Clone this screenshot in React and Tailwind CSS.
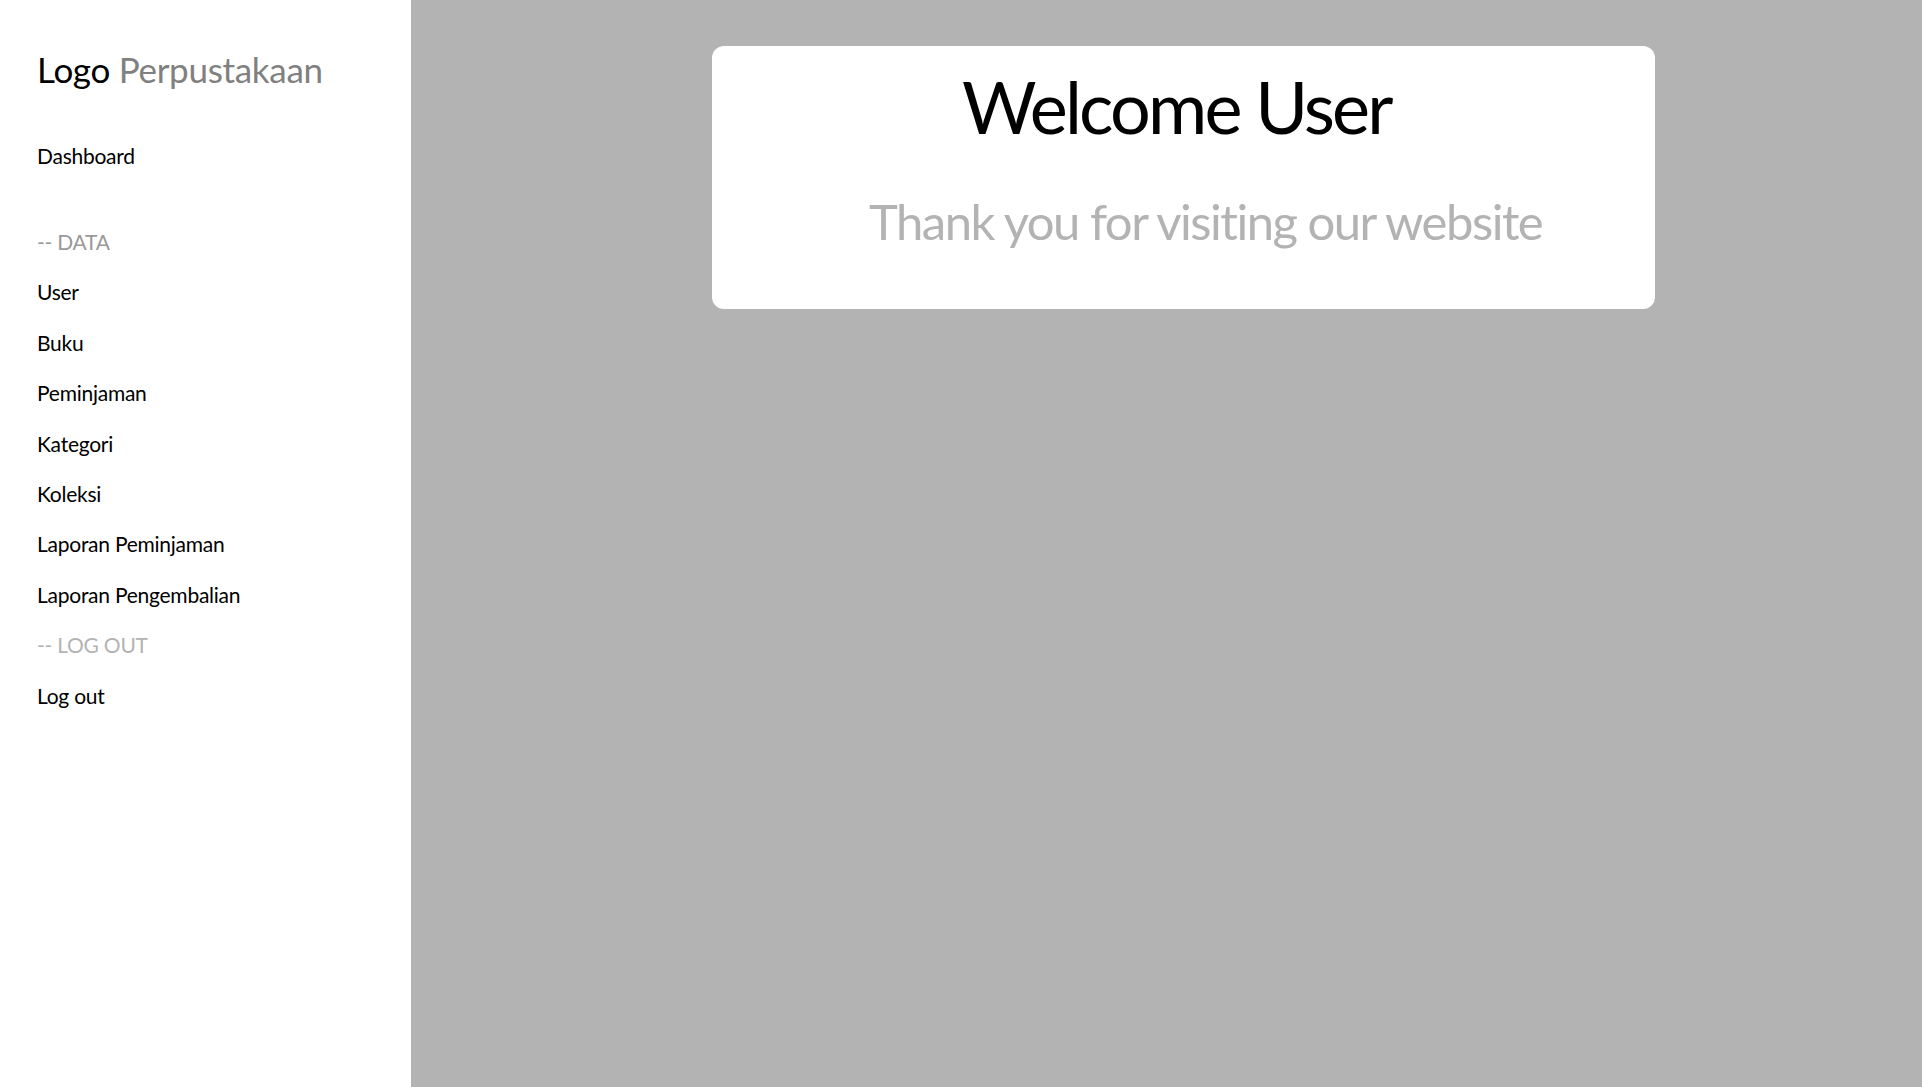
import React from "react";

const dataLinks = [
  "User",
  "Buku",
  "Peminjaman",
  "Kategori",
  "Koleksi",
  "Laporan Peminjaman",
  "Laporan Pengembalian",
];

function Sidebar() {
  return (
    <aside className="w-[411px] shrink-0 bg-white pl-[37px] pt-[52px]">
      {/* Brand */}
      <div className="text-[35px] leading-[35px] tracking-[-0.3px] whitespace-nowrap">
        <span className="text-black">Logo</span>{" "}
        <span className="text-[#808080]">Perpustakaan</span>
      </div>

      <nav className="mt-[44px] text-[21px] leading-[50.4px] tracking-[-0.25px]">
        <a href="#" className="block text-black">
          Dashboard
        </a>

        <div className="mt-[35.6px] text-[#999999]">-- DATA</div>
        {dataLinks.map((item) => (
          <a key={item} href="#" className="block text-black">
            {item}
          </a>
        ))}

        <div className="text-[#b3b3b3]">-- LOG OUT</div>
        <a href="#" className="block text-black">
          Log out
        </a>
      </nav>
    </aside>
  );
}

export default function App() {
  return (
    <div
      className="flex h-[1087px] w-full overflow-hidden [font-variant-ligatures:none]"
      style={{ fontFamily: 'Lato, "Noto Sans", sans-serif' }}
    >
      <Sidebar />

      {/* Main content */}
      <main className="flex-1 bg-[#b3b3b3] pt-[46px] pl-[301px]">
        <div className="w-[943px] h-[263px] rounded-[12px] bg-white pt-[24px]">
          <h1 className="pl-[250px] text-[72px] leading-[72px] tracking-[-2.8px] text-black whitespace-nowrap">
            Welcome User
          </h1>
          <p className="mt-[55px] pl-[157px] text-[49px] leading-[49px] tracking-[-1.5px] text-[#b3b3b3] whitespace-nowrap">
            Thank you for visiting our website
          </p>
        </div>
      </main>
    </div>
  );
}
